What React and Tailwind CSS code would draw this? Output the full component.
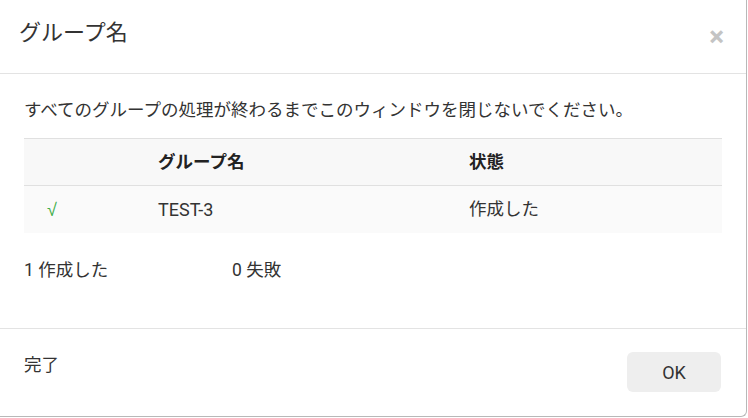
import React from 'react';

const font = { fontFamily: 'Roboto, "Noto Sans CJK JP", sans-serif' };

const rows = [{ ok: true, name: 'TEST-3', status: '作成した' }];

export default function App() {
  return (
    <div className="w-[748px] h-[418px] bg-white overflow-hidden" style={font}>
      <div className="w-[747px] h-[417px] bg-white border-r border-b border-[#b8b8b8] rounded-br-md flex flex-col text-[#333]">
        {/* header */}
        <div className="h-[74px] border-b border-[#e3e3e3] flex items-start justify-between pl-[19px] pr-[22px] shrink-0">
          <h1 className="text-[22px] leading-[28px] pt-[19px] text-[#333]">グループ名</h1>
          <button className="text-[28px] leading-none pt-[23px] font-bold text-[#c4c4c4]">×</button>
        </div>

        {/* body */}
        <div className="px-[24px] pt-[24px] h-[255px] border-b border-[#e3e3e3] shrink-0">
          <p className="text-[17.5px] leading-[24px]">すべてのグループの処理が終わるまでこのウィンドウを閉じないでください。</p>
          <div className="mt-[16px] border-t border-[#e0e0e0]">
            <div className="grid grid-cols-[134px_311px_1fr] h-[47px] items-center bg-[#f8f8f8] border-b border-[#e0e0e0] text-[17.5px] font-bold text-[#222]">
              <div />
              <div>グループ名</div>
              <div>状態</div>
            </div>
            {rows.map((r) => (
              <div key={r.name} className="grid grid-cols-[134px_311px_1fr] h-[47px] items-center bg-[#fafafa] text-[17.5px]">
                <div className="pl-[23px] text-[#3fae49] text-[18px] font-['DejaVu_Sans',sans-serif] font-light">√</div>
                <div className="text-[18px]">{r.name}</div>
                <div>{r.status}</div>
              </div>
            ))}
          </div>
          <div className="mt-[25px] flex text-[17.5px] leading-[24px]">
            <span className="w-[208px]">1 作成した</span>
            <span>0 失敗</span>
          </div>
        </div>

        {/* footer */}
        <div className="flex justify-between items-start px-[24px] pt-[23px] pr-[25px]">
          <span className="text-[17.5px] leading-[24px] pt-[1px]">完了</span>
          <button className="w-[94px] h-[40px] rounded-md bg-[#eeeeee] text-[18px] text-[#333]">OK</button>
        </div>
      </div>
    </div>
  );
}
